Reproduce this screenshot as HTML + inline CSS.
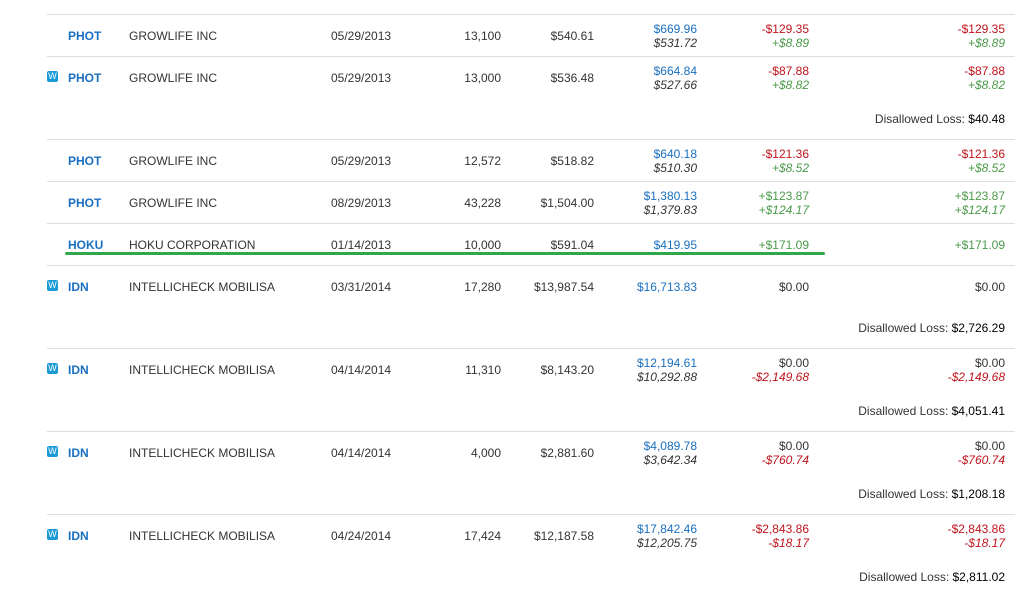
<!DOCTYPE html>
<html><head><meta charset="utf-8"><style>
body{margin:0;width:1023px;height:589px;background:#fff;font-family:"Liberation Sans",Arial,sans-serif;font-size:12px;color:#333;position:relative;overflow:hidden}
.hl{position:absolute;left:47px;width:968px;height:1px;background:#ddd}
.t{position:absolute;white-space:nowrap;line-height:14px;margin-top:1px}
.r{text-align:right}
.tk{color:#1a6fc0;font-weight:bold;left:68px}
.b{color:#1a6fc0}.red{color:#c0141c}.g{color:#4a9a4a}
i{font-style:italic}
.w{position:absolute;left:47px;width:11px;height:11px;background:#1a9ad6;border-radius:2px;color:#fff;font-size:9px;line-height:11px;text-align:center;font-weight:normal}
</style></head><body>
<div class="hl" style="top:14px"></div>
<div class="hl" style="top:56px"></div>
<div class="hl" style="top:139px"></div>
<div class="hl" style="top:181px"></div>
<div class="hl" style="top:223px"></div>
<div class="hl" style="top:265px"></div>
<div class="hl" style="top:348px"></div>
<div class="hl" style="top:431px"></div>
<div class="hl" style="top:514px"></div>
<div style="position:absolute;left:65px;top:252px;width:760px;height:3px;background:#2ea84a;border-radius:2px"></div>

<!-- R1 -->
<div class="t tk" style="top:28px">PHOT</div><div class="t" style="left:129px;top:28px">GROWLIFE INC</div><div class="t" style="left:331px;top:28px">05/29/2013</div>
<div class="t r" style="right:522px;top:28px">13,100</div><div class="t r" style="right:429px;top:28px">$540.61</div>
<div class="t r b" style="right:326px;top:21px">$669.96</div><div class="t r" style="right:326px;top:35px"><i>$531.72</i></div>
<div class="t r red" style="right:214px;top:21px">-$129.35</div><div class="t r g" style="right:214px;top:35px"><i>+$8.89</i></div>
<div class="t r red" style="right:18px;top:21px">-$129.35</div><div class="t r g" style="right:18px;top:35px"><i>+$8.89</i></div>
<!-- R2 -->
<div class="w" style="top:71px">W</div>
<div class="t tk" style="top:70px">PHOT</div><div class="t" style="left:129px;top:70px">GROWLIFE INC</div><div class="t" style="left:331px;top:70px">05/29/2013</div>
<div class="t r" style="right:522px;top:70px">13,000</div><div class="t r" style="right:429px;top:70px">$536.48</div>
<div class="t r b" style="right:326px;top:63px">$664.84</div><div class="t r" style="right:326px;top:77px"><i>$527.66</i></div>
<div class="t r red" style="right:214px;top:63px">-$87.88</div><div class="t r g" style="right:214px;top:77px"><i>+$8.82</i></div>
<div class="t r red" style="right:18px;top:63px">-$87.88</div><div class="t r g" style="right:18px;top:77px"><i>+$8.82</i></div>
<div class="t r" style="right:18px;top:111px">Disallowed Loss: <span style="color:#000">$40.48</span></div>
<!-- R3 -->
<div class="t tk" style="top:153px">PHOT</div><div class="t" style="left:129px;top:153px">GROWLIFE INC</div><div class="t" style="left:331px;top:153px">05/29/2013</div>
<div class="t r" style="right:522px;top:153px">12,572</div><div class="t r" style="right:429px;top:153px">$518.82</div>
<div class="t r b" style="right:326px;top:146px">$640.18</div><div class="t r" style="right:326px;top:160px"><i>$510.30</i></div>
<div class="t r red" style="right:214px;top:146px">-$121.36</div><div class="t r g" style="right:214px;top:160px"><i>+$8.52</i></div>
<div class="t r red" style="right:18px;top:146px">-$121.36</div><div class="t r g" style="right:18px;top:160px"><i>+$8.52</i></div>
<!-- R4 -->
<div class="t tk" style="top:195px">PHOT</div><div class="t" style="left:129px;top:195px">GROWLIFE INC</div><div class="t" style="left:331px;top:195px">08/29/2013</div>
<div class="t r" style="right:522px;top:195px">43,228</div><div class="t r" style="right:429px;top:195px">$1,504.00</div>
<div class="t r b" style="right:326px;top:188px">$1,380.13</div><div class="t r" style="right:326px;top:202px"><i>$1,379.83</i></div>
<div class="t r g" style="right:214px;top:188px">+$123.87</div><div class="t r g" style="right:214px;top:202px"><i>+$124.17</i></div>
<div class="t r g" style="right:18px;top:188px">+$123.87</div><div class="t r g" style="right:18px;top:202px"><i>+$124.17</i></div>
<!-- R5 -->
<div class="t tk" style="top:237px">HOKU</div><div class="t" style="left:129px;top:237px">HOKU CORPORATION</div><div class="t" style="left:331px;top:237px">01/14/2013</div>
<div class="t r" style="right:522px;top:237px">10,000</div><div class="t r" style="right:429px;top:237px">$591.04</div>
<div class="t r b" style="right:326px;top:237px">$419.95</div>
<div class="t r g" style="right:214px;top:237px">+$171.09</div>
<div class="t r g" style="right:18px;top:237px">+$171.09</div>
<!-- R6 -->
<div class="w" style="top:280px">W</div>
<div class="t tk" style="top:279px">IDN</div><div class="t" style="left:129px;top:279px">INTELLICHECK MOBILISA</div><div class="t" style="left:331px;top:279px">03/31/2014</div>
<div class="t r" style="right:522px;top:279px">17,280</div><div class="t r" style="right:429px;top:279px">$13,987.54</div>
<div class="t r b" style="right:326px;top:279px">$16,713.83</div>
<div class="t r" style="right:214px;top:279px">$0.00</div>
<div class="t r" style="right:18px;top:279px">$0.00</div>
<div class="t r" style="right:18px;top:320px">Disallowed Loss: <span style="color:#000">$2,726.29</span></div>
<!-- R7 -->
<div class="w" style="top:363px">W</div>
<div class="t tk" style="top:362px">IDN</div><div class="t" style="left:129px;top:362px">INTELLICHECK MOBILISA</div><div class="t" style="left:331px;top:362px">04/14/2014</div>
<div class="t r" style="right:522px;top:362px">11,310</div><div class="t r" style="right:429px;top:362px">$8,143.20</div>
<div class="t r b" style="right:326px;top:355px">$12,194.61</div><div class="t r" style="right:326px;top:369px"><i>$10,292.88</i></div>
<div class="t r" style="right:214px;top:355px">$0.00</div><div class="t r red" style="right:214px;top:369px"><i>-$2,149.68</i></div>
<div class="t r" style="right:18px;top:355px">$0.00</div><div class="t r red" style="right:18px;top:369px"><i>-$2,149.68</i></div>
<div class="t r" style="right:18px;top:403px">Disallowed Loss: <span style="color:#000">$4,051.41</span></div>
<!-- R8 -->
<div class="w" style="top:446px">W</div>
<div class="t tk" style="top:445px">IDN</div><div class="t" style="left:129px;top:445px">INTELLICHECK MOBILISA</div><div class="t" style="left:331px;top:445px">04/14/2014</div>
<div class="t r" style="right:522px;top:445px">4,000</div><div class="t r" style="right:429px;top:445px">$2,881.60</div>
<div class="t r b" style="right:326px;top:438px">$4,089.78</div><div class="t r" style="right:326px;top:452px"><i>$3,642.34</i></div>
<div class="t r" style="right:214px;top:438px">$0.00</div><div class="t r red" style="right:214px;top:452px"><i>-$760.74</i></div>
<div class="t r" style="right:18px;top:438px">$0.00</div><div class="t r red" style="right:18px;top:452px"><i>-$760.74</i></div>
<div class="t r" style="right:18px;top:486px">Disallowed Loss: <span style="color:#000">$1,208.18</span></div>
<!-- R9 -->
<div class="w" style="top:529px">W</div>
<div class="t tk" style="top:528px">IDN</div><div class="t" style="left:129px;top:528px">INTELLICHECK MOBILISA</div><div class="t" style="left:331px;top:528px">04/24/2014</div>
<div class="t r" style="right:522px;top:528px">17,424</div><div class="t r" style="right:429px;top:528px">$12,187.58</div>
<div class="t r b" style="right:326px;top:521px">$17,842.46</div><div class="t r" style="right:326px;top:535px"><i>$12,205.75</i></div>
<div class="t r red" style="right:214px;top:521px">-$2,843.86</div><div class="t r red" style="right:214px;top:535px"><i>-$18.17</i></div>
<div class="t r red" style="right:18px;top:521px">-$2,843.86</div><div class="t r red" style="right:18px;top:535px"><i>-$18.17</i></div>
<div class="t r" style="right:18px;top:569px">Disallowed Loss: <span style="color:#000">$2,811.02</span></div>
</body></html>
